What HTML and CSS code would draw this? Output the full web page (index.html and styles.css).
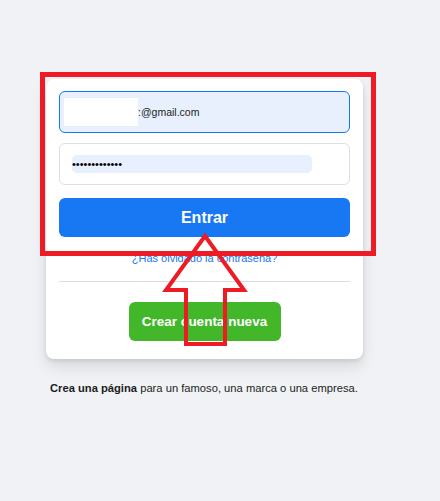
FILE: index.html
```html
<!DOCTYPE html>
<html>

<head>
    <title>Entrar</title>
    <link rel="stylesheet" href="styles.css">
</head>

<body>
    <div class="page">
        <div class="card">
            <div class="field field-active">
                <span class="mask"></span>
                <span class="value">:@gmail.com</span>
            </div>
            <div class="field">
                <span class="autofill">&bull;&bull;&bull;&bull;&bull;&bull;&bull;&bull;&bull;&bull;&bull;&bull;&bull;</span>
            </div>
            <button class="btn-login">Entrar</button>
            <a class="forgot" href="#">¿Has olvidado la contraseña?</a>
            <hr class="divider">
            <button class="btn-signup">Crear cuenta nueva</button>
        </div>
        <p class="create-page"><b>Crea una página</b> para un famoso, una marca o una empresa.</p>
    </div>

    <!-- Marcador rojo sobre el formulario -->
    <svg class="callout" width="440" height="501" viewBox="0 0 440 501">
        <rect x="42.5" y="74.5" width="331" height="179" fill="none" stroke="#ed1c24" stroke-width="5"/>
        <polygon points="205,236 244,290 225,290 225,344 186,344 186,290 166,290" fill="none" stroke="#ed1c24" stroke-width="4"/>
    </svg>
</body>

</html>
```

FILE: styles.css
```css
body {
    margin: 0;
    background: #f0f2f5;
    font-family: "Liberation Sans", Arial, sans-serif;
    color: #1c1e21;
}

.page {
    padding: 79px 0 0 46px;
}

.card {
    width: 317px;
    box-sizing: border-box;
    padding: 12px 13px 18px;
    background: #fff;
    border-radius: 8px;
    box-shadow: 0 2px 4px rgba(0, 0, 0, .1), 0 8px 16px rgba(0, 0, 0, .1);
    display: flex;
    flex-direction: column;
}

.field {
    height: 42px;
    box-sizing: border-box;
    border: 1px solid #dddfe2;
    border-radius: 6px;
    display: flex;
    align-items: center;
    padding-left: 12px;
    font-size: 11px;
}

.field + .field {
    margin-top: 10px;
}

.field-active {
    background: #e8f0fe;
    border-color: #1877f2;
    padding-left: 4px;
    font-size: 10.5px;
}

.mask {
    width: 74px;
    height: 28px;
    background: #fff;
}

.autofill {
    width: 240px;
    height: 18px;
    border-radius: 5px;
    background: #e8f0fe;
    display: flex;
    align-items: center;
    color: #000;
}

.btn-login,
.btn-signup {
    border: none;
    border-radius: 6px;
    color: #fff;
    font-family: inherit;
    font-weight: bold;
    cursor: pointer;
}

.btn-login {
    margin-top: 13px;
    height: 39px;
    background: #1877f2;
    font-size: 16px;
}

.forgot {
    margin-top: 14px;
    text-align: center;
    font-size: 11px;
    line-height: 14px;
    color: #1877f2;
    text-decoration: none;
}

.divider {
    margin: 16px 0 0;
    border: none;
    border-top: 1px solid #dadde1;
}

.btn-signup {
    margin: 20px auto 0;
    width: 152px;
    height: 39px;
    background: #42b72a;
    font-size: 13.5px;
}

.create-page {
    margin: 22px 0 0 4px;
    font-size: 11.2px;
    line-height: 14px;
}

.callout {
    position: absolute;
    top: 0;
    left: 0;
    pointer-events: none;
}
```
